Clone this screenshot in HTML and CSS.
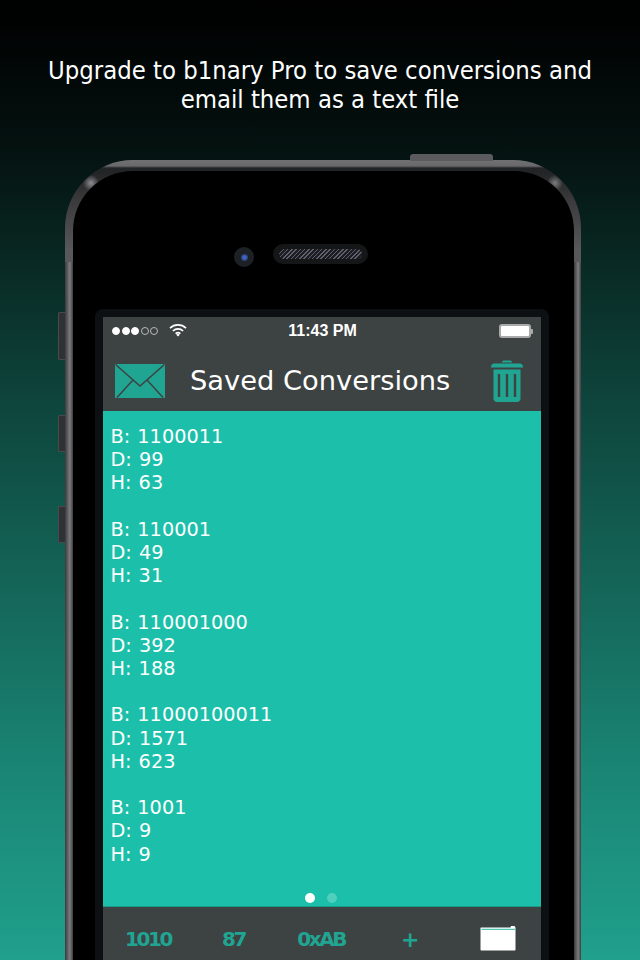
FILE: index.html
```html
<!doctype html>
<html lang="en">
<head>
	<meta charset="utf-8">
	<title>b1nary Pro</title>
	<link rel="stylesheet" href="styles.css">
</head>
<body>
	<h1 class="headline">Upgrade to b1nary Pro to save conversions and<br>email them as a text file</h1>

	<div class="phone">
		<div class="sleep-btn"></div>
		<div class="side-btn mute"></div>
		<div class="side-btn vol-up"></div>
		<div class="side-btn vol-down"></div>
		<div class="band band-left"></div>
		<div class="band band-right"></div>

		<div class="face">
			<div class="earpiece">
				<div class="camera"><span class="lens"></span></div>
				<div class="speaker"><span class="mesh"></span></div>
			</div>

			<div class="bezel">
				<div class="screen">
					<div class="status-bar">
						<div class="status-left">
							<span class="dot on"></span><span class="dot on"></span><span class="dot on"></span><span class="dot"></span><span class="dot"></span>
							<svg class="wifi" width="18" height="14" viewBox="0 0 18 14">
								<path d="M1 5.2a11.5 11.5 0 0 1 16 0" fill="none" stroke="#fff" stroke-width="1.7"/>
								<path d="M3.9 8a7.4 7.4 0 0 1 10.2 0" fill="none" stroke="#fff" stroke-width="1.7"/>
								<path d="M6.6 10.6a3.6 3.6 0 0 1 4.8 0" fill="none" stroke="#fff" stroke-width="1.7"/>
								<path d="M7.2 11.8 9 10.6l1.8 1.2L9 13.6z" fill="#fff"/>
							</svg>
						</div>
						<div class="status-time">11:43 PM</div>
						<div class="battery"><span class="battery-fill"></span><span class="battery-tip"></span></div>
					</div>

					<div class="title-bar">
						<svg class="mail-icon" width="50" height="34" viewBox="0 0 50 34">
							<rect width="50" height="34" fill="#20a592"/>
							<path d="M0.5 0.5 25 22 49.5 0.5M2 33.5 18 16M48 33.5 32 16" fill="none" stroke="#3d4242" stroke-width="1.5"/>
						</svg>
						<div class="title">Saved Conversions</div>
						<svg class="trash-icon" width="32" height="44" viewBox="0 0 32 44">
							<path d="M11 3.5C11 2 12 1.500 13 1.500h6c1 0 2 .5 2 2z" fill="#20a592"/>
							<path d="M3 4.500h26c1.500 0 3 1.500 3 3.500v.5H0V8c0-2 1.500-3.500 3-3.500z" fill="#20a592"/>
							<path d="M2.500 10.500h27v29c0 2.200-1.500 3.500-3.500 3.500H6c-2 0-3.500-1.300-3.500-3.500z" fill="#20a592"/>
							<path d="M8 15v23M16 15v23M24 15v23" stroke="#3d4242" stroke-width="2.400"/>
						</svg>
					</div>

					<div class="content">
						<p class="entry">B: 1100011<br>D: 99<br>H: 63</p>
						<p class="entry">B: 110001<br>D: 49<br>H: 31</p>
						<p class="entry">B: 110001000<br>D: 392<br>H: 188</p>
						<p class="entry">B: 11000100011<br>D: 1571<br>H: 623</p>
						<p class="entry">B: 1001<br>D: 9<br>H: 9</p>
						<div class="pager"><span class="pager-dot active"></span><span class="pager-dot"></span></div>
					</div>

					<div class="tab-bar">
						<span class="tab tab-bin">1010</span>
						<span class="tab tab-dec">87</span>
						<span class="tab tab-hex">0xAB</span>
						<span class="tab tab-plus">+</span>
						<svg class="folder-icon" width="36" height="26" viewBox="0 0 36 26">
							<path d="M1 2.500h29.500L31 1h3.500L35.500 2.500V24.500c0 .6-.4 1-1 1H1.500c-.6 0-1-.4-1-1V3c0-.3.2-.5.5-.5z" fill="#fff"/>
							<path d="M1.500 3.700h33.500v1.300H1.500z" fill="#52c6b3"/>
						</svg>
					</div>
				</div>
			</div>
		</div>
	</div>
</body>
</html>
```

FILE: styles.css
```css
html, body {
	margin: 0;
	height: 960px;
	overflow: hidden;
}
body {
	background: linear-gradient(to bottom, #000 0%, #04110f 15%, #0e453c 42%, #1a8574 80%, #20a08d 100%);
	font-family: "DejaVu Sans", sans-serif;
	color: #fff;
}
.headline {
	margin: 0;
	padding-top: 56px;
	height: 160px;
	box-sizing: border-box;
	text-align: center;
	font-family: "DejaVu Sans Condensed", "DejaVu Sans", sans-serif;
	font-stretch: condensed;
	font-weight: 400;
	font-size: 25.400px;
	line-height: 29px;
}

/* phone body */
.phone {
	position: relative;
	margin-left: 65px;
	width: 516px;
	height: 800px;
	box-sizing: border-box;
	padding: 11px 7px 0 8px;
	border-radius: 68px 68px 0 0;
	background:
		radial-gradient(circle at 26px 23px, #8f8f91 0, rgba(143,143,145,0) 8px),
		radial-gradient(circle at 490px 23px, #7d7d7f 0, rgba(125,125,127,0) 8px),
		linear-gradient(to bottom, #717173 0, #69696b 6px, #232426 8px, #232426 12px, #3a3a3c 40px, #58585a 90px);
}
.band {
	position: absolute;
	top: 102px;
	bottom: 0;
	width: 8px;
	background: linear-gradient(to right, #3a3a3c, #7c7c7e 60%, #3e3e40);
}
.band-left { left: 0; }
.band-right { right: 0; width: 7px; }
.sleep-btn {
	position: absolute;
	top: -6px;
	left: 345px;
	width: 83px;
	height: 7px;
	border-radius: 3px 3px 0 0;
	background: #5b5b5d;
}
.side-btn {
	position: absolute;
	left: -7px;
	width: 6px;
	border: 1px solid #4a4a4c;
	border-right: 0;
	border-radius: 2px 0 0 2px;
	background: #2f3234;
}
.mute { top: 152px; height: 46px; }
.vol-up { top: 255px; height: 35px; }
.vol-down { top: 346px; height: 35px; }

.face {
	position: relative;
	height: 100%;
	padding-top: 70px;
	box-sizing: border-box;
	border-radius: 60px 60px 0 0;
	background: #000;
}
.earpiece {
	display: flex;
	align-items: center;
	height: 68px;
	padding-left: 161px;
	padding-bottom: 42px;
	gap: 19px;
	box-sizing: border-box;
}
.camera {
	display: flex;
	align-items: center;
	justify-content: center;
	width: 20px;
	height: 20px;
	margin-top: 6px;
	border-radius: 50%;
	background: #1d2024;
}
.lens {
	width: 7px;
	height: 7px;
	border-radius: 50%;
	background: radial-gradient(circle, #3e63b8 30%, #16203a 100%);
}
.speaker {
	display: flex;
	align-items: center;
	justify-content: center;
	width: 95px;
	height: 20px;
	border-radius: 10px;
	background: #141618;
}
.mesh {
	width: 83px;
	height: 10px;
	border-radius: 5px;
	background: repeating-linear-gradient(135deg, #5f5f6e 0 1px, #1c1c22 1px 3px);
}

/* app screen */
.bezel {
	margin-left: 22px;
	width: 454px;
	height: 651px;
	padding: 8px 8px 0;
	box-sizing: border-box;
	border-radius: 8px 8px 0 0;
	background: #0d1012;
}
.screen {
	width: 438px;
	height: 643px;
	background: #3d4242;
}
.status-bar {
	display: flex;
	align-items: center;
	justify-content: space-between;
	height: 28px;
	padding: 0 8px 0 9px;
	box-sizing: border-box;
}
.status-left {
	display: flex;
	align-items: center;
	width: 150px;
}
.dot {
	width: 8px;
	height: 8px;
	margin-right: 1.500px;
	border: 1px solid #b9bbbb;
	border-radius: 50%;
	box-sizing: border-box;
}
.dot.on {
	background: #fff;
	border-color: #fff;
}
.wifi {
	margin-left: 9px;
	margin-top: -3px;
}
.status-time {
	font-family: "Liberation Sans", sans-serif;
	font-weight: 700;
	font-size: 16px;
}
.battery {
	display: flex;
	align-items: center;
	width: 150px;
	justify-content: flex-end;
}
.battery-fill {
	width: 28px;
	height: 10px;
	border: 2px solid #a9abab;
	border-radius: 3px;
	background: #fff;
}
.battery-tip {
	width: 2px;
	height: 5px;
	background: #a9abab;
	border-radius: 0 1px 1px 0;
}
.title-bar {
	display: flex;
	align-items: center;
	height: 66px;
	padding: 6px 0 0 12px;
	box-sizing: border-box;
}
.title {
	margin: -2px 0 0 25px;
	width: 301px;
	font-size: 27.300px;
	white-space: nowrap;
}
.content {
	position: relative;
	height: 495px;
	padding: 14px 8px 0 7.500px;
	box-sizing: border-box;
	background: #1cc0aa;
	font-size: 19.300px;
	line-height: 23.200px;
	word-spacing: 1px;
}
.entry {
	margin: 0 0 23.200px;
}
.pager {
	position: absolute;
	left: 202px;
	bottom: 3px;
	display: flex;
	gap: 12px;
}
.pager-dot {
	width: 10px;
	height: 10px;
	border-radius: 50%;
	background: #4fcfbc;
}
.pager-dot.active {
	background: #fff;
}
.tab-bar {
	display: flex;
	align-items: center;
	height: 54px;
	padding-top: 11px;
	border-top: 1px solid #1a9b8a;
	box-sizing: border-box;
	color: #20a592;
	font-weight: 700;
	font-size: 20px;
	letter-spacing: -2.400px;
}
.tab-bin { margin-left: 22px; }
.tab-dec { margin-left: 51px; }
.tab-hex { margin-left: 52px; }
.tab-plus { margin-left: 56px; font-size: 22px; }
.folder-icon { margin-left: 63px; margin-top: -3px; }
```
